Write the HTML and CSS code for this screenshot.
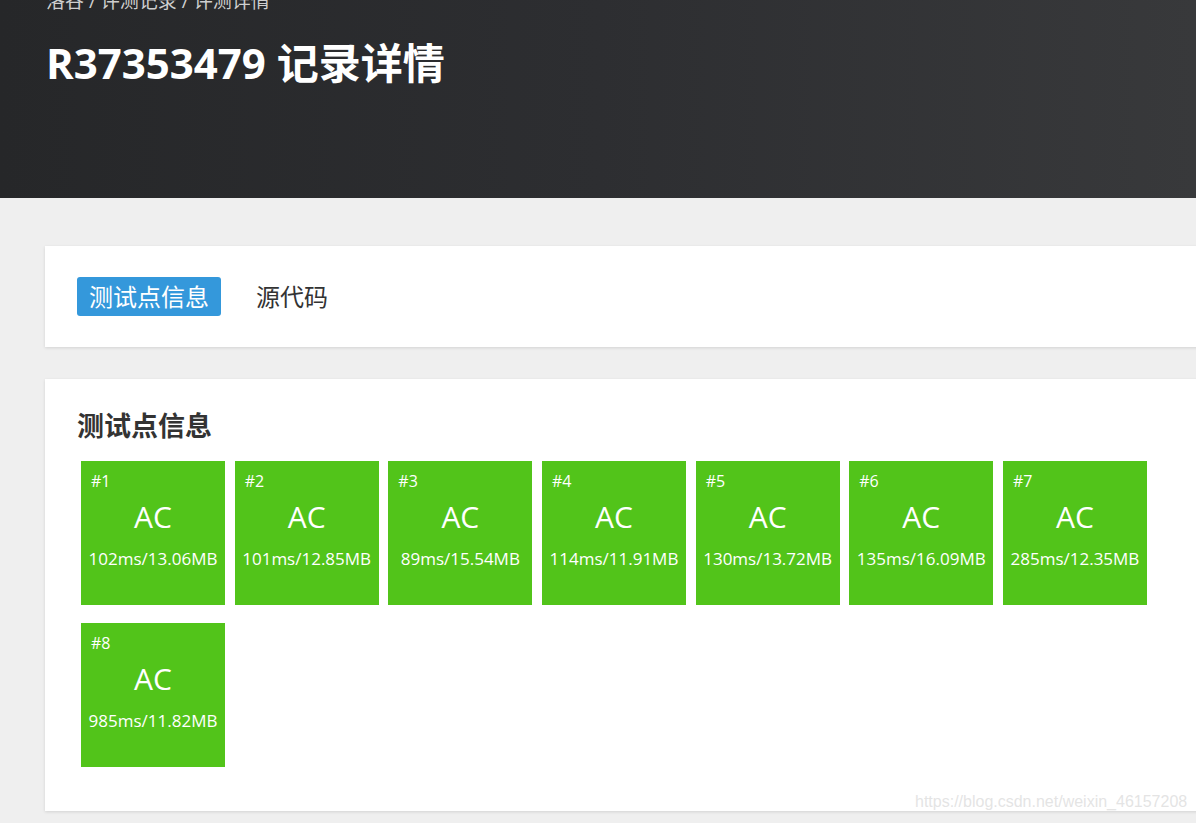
FILE: index.html
```html
<!DOCTYPE html>
<html lang="zh-CN">
<head>
<meta charset="utf-8">
<title>R37353479 记录详情</title>
<link rel="stylesheet" href="styles.css">
</head>
<body>
<header class="header">
  <div class="breadcrumb">洛谷 / 评测记录 / 评测详情</div>
  <h1 class="title">R37353479 记录详情</h1>
</header>
<main class="main">
  <section class="card tabs-card">
    <div class="tabs">
      <span class="tab tab-active">测试点信息</span>
      <span class="tab">源代码</span>
    </div>
  </section>
  <section class="card cases-card">
    <h2 class="cases-title">测试点信息</h2>
    <div class="cases">
      <div class="case"><div class="case-id">#1</div><div class="case-status">AC</div><div class="case-info">102ms/13.06MB</div></div>
      <div class="case"><div class="case-id">#2</div><div class="case-status">AC</div><div class="case-info">101ms/12.85MB</div></div>
      <div class="case"><div class="case-id">#3</div><div class="case-status">AC</div><div class="case-info">89ms/15.54MB</div></div>
      <div class="case"><div class="case-id">#4</div><div class="case-status">AC</div><div class="case-info">114ms/11.91MB</div></div>
      <div class="case"><div class="case-id">#5</div><div class="case-status">AC</div><div class="case-info">130ms/13.72MB</div></div>
      <div class="case"><div class="case-id">#6</div><div class="case-status">AC</div><div class="case-info">135ms/16.09MB</div></div>
      <div class="case"><div class="case-id">#7</div><div class="case-status">AC</div><div class="case-info">285ms/12.35MB</div></div>
      <div class="case"><div class="case-id">#8</div><div class="case-status">AC</div><div class="case-info">985ms/11.82MB</div></div>
    </div>
  </section>
</main>
<div class="watermark">https://blog.csdn.net/weixin_46157208</div>
</body>
</html>
```
FILE: styles.css
```css
html {
  overflow: hidden;
}
body {
  margin: 0;
  background: #efefef;
  font-family: "Open Sans", "Noto Sans CJK SC", sans-serif;
  color: #333;
  width: 1196px;
  height: 823px;
  overflow: hidden;
  position: relative;
}
.header {
  height: 198px;
  box-sizing: border-box;
  padding-left: 46px;
  background: linear-gradient(90deg, #262729 0%, #2d2e31 50%, #38393b 100%);
  overflow: hidden;
}
.breadcrumb {
  margin-top: -13px;
  font-size: 19px;
  line-height: 28px;
  color: #cfcfcf;
}
.title {
  margin: 23px 0 0;
  font-size: 42px;
  line-height: 50px;
  font-weight: 700;
  color: #fff;
}
.main {
  padding: 48px 0 0 45px;
}
.card {
  background: #fff;
  width: 1200px;
  box-shadow: 0 1px 3px rgba(0, 0, 0, 0.12);
  box-sizing: border-box;
}
.tabs-card {
  height: 101px;
  padding: 31px 32px;
}
.tabs {
  display: flex;
  align-items: center;
  gap: 35px;
}
.tab {
  font-size: 24px;
  line-height: 39px;
  color: #333;
}
.tab-active {
  background: #3498db;
  color: #fff;
  border-radius: 3px;
  padding: 0 12px;
}
.cases-card {
  margin-top: 32px;
  padding: 27px 32px 44px;
}
.cases-title {
  margin: 0;
  font-size: 27px;
  line-height: 39px;
  font-weight: 700;
  color: #333;
}
.cases {
  margin-top: 16px;
  padding-left: 4px;
  display: flex;
  flex-wrap: wrap;
  column-gap: 9.67px;
  row-gap: 18px;
}
.case {
  width: 144px;
  height: 144px;
  background: #52c41a;
  color: #fff;
  box-sizing: border-box;
  padding-top: 10px;
}
.case-id {
  padding-left: 10px;
  font-size: 16px;
  line-height: 20px;
}
.case-status {
  margin-top: 8px;
  text-align: center;
  font-size: 30px;
  line-height: 36px;
}
.case-info {
  margin-top: 12px;
  text-align: center;
  font-size: 17px;
  line-height: 24px;
  white-space: nowrap;
}
.watermark {
  position: absolute;
  left: 915px;
  top: 793px;
  font-family: "Liberation Sans", Arial, sans-serif;
  font-size: 16px;
  color: rgba(225, 225, 225, 0.9);
  white-space: nowrap;
}
```
